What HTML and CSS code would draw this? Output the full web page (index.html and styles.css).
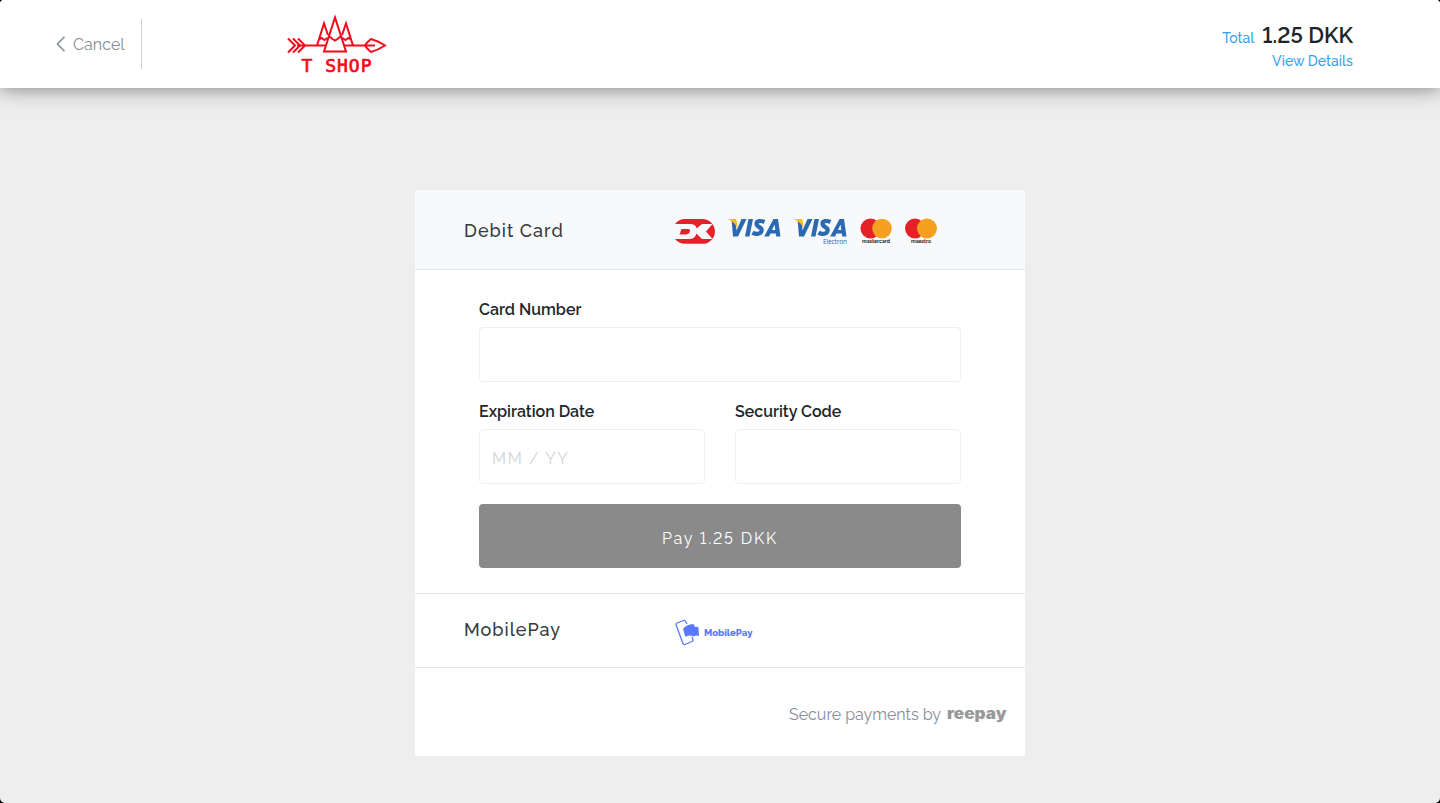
FILE: index.html
```html
<!DOCTYPE html>
<html lang="en">
<head>
<meta charset="utf-8">
<title>T Shop – Payment</title>
<link rel="stylesheet" href="styles.css">
</head>
<body>
<div class="window">
<header class="topbar">
  <a class="cancel"><svg class="chevron" width="10" height="16" viewBox="0 0 10 16"><path d="M8.500 .8 1.500 8l7 7.200"/></svg><span class="cancel-text">Cancel</span></a>
  <svg class="logo" width="102" height="66" viewBox="0 0 102 66">
    <g class="logo-lines">
      <path d="M10 31.500H39M57 31.500H78"/>
      <path d="M1 24.500l7 7L1 38.500M6 24.500l7 7-7 7M11 24.500l7 7-7 7"/>
      <path d="M78 31.500q1.500-3 6-6.500 7 2 14 6.500-7 4.500-14 6.500-4.500-3.500-6-6.500zM78 31.500h10"/>
      <path d="M30 31.500 37 9.500 41 21M31.500 26l3-2 3 2 3-2M66 31.500 59 9.500 55 21M64.500 26l-3-2-3 2-3-2"/>
      <path d="M37 37.500 48 3.500 59 37.500zM42.500 22.500l3 2.500 2.500 1.500 2.500-1.500 3-2.500"/>
    </g>
    <text class="logo-text" x="14.500" y="58" textLength="70">T SHOP</text>
  </svg>
  <div class="summary">
    <div class="amount-row"><span class="total">Total</span><span class="amount">1.25 DKK</span></div>
    <a class="details">View Details</a>
  </div>
</header>
<main class="card">
  <section class="method method-active">
    <h2 class="method-name name-debit">Debit Card</h2>
    <svg class="brands" width="264" height="30" viewBox="0 0 264 30">
      <clipPath id="dk"><path d="M10 3h17.500a12.400 12.400 0 0 1 0 24.800H10Q4 27.800 0 23V8Q4 3 10 3z"/></clipPath>
      <g clip-path="url(#dk)">
        <rect class="red" y="3" width="41" height="25"/>
        <path class="white" d="M-1 8H15q6 0 6.500 4.500L27 8h10.500l-6.500 7.500 6.500 7.500H27l-5.500-5.500Q20 23 14 23H-1z"/>
        <path class="red" d="M6.500 13h6.500q2.500 0 2 2-.5 3-4 3.500H4.500z"/>
      </g>
      <g id="visa">
        <path class="visa-blue" d="M56.500 3h4l1 11.500L66.500 3h5l-8.500 17.500h-5zM73.500 3h4.500l-3.500 17.500h-4.500zM98.500 3h4.500l2.500 17.500h-4.200l-.6-3h-5.200L94 20.500H89.200zM99.500 8.500 97 14h3.300z"/>
        <path class="visa-s" d="M89.500 6c-4-1.800-8-1-8 1.800 0 3.300 5.500 3.300 5.200 6.300-.4 4.300-5.700 4.700-9.200 2.500"/>
        <path class="gold" d="M52.500 3h7q2 0 2.200 2l.8 7-3-4.500q-2.500-3-7-4.500z"/>
      </g>
      <use href="#visa" x="66"/>
      <text class="electron" x="148" y="27.500" textLength="24">Electron</text>
      <circle class="card-red" cx="195.500" cy="12.500" r="10"/>
      <circle class="card-orange" cx="207" cy="12.500" r="9.800"/>
      <text class="brand-text" x="187" y="27" textLength="28">mastercard</text>
      <circle class="card-red" cx="240" cy="12.500" r="10"/>
      <circle class="card-orange" cx="252" cy="12.500" r="10"/>
      <text class="brand-text" x="236" y="27" textLength="20">maestro</text>
    </svg>
  </section>
  <form class="form">
    <div class="field"><label class="label label-number">Card Number</label><div class="input"></div></div>
    <div class="columns">
      <div class="field"><label class="label label-date">Expiration Date</label><div class="input"><span class="placeholder">MM / YY</span></div></div>
      <div class="field"><label class="label label-code">Security Code</label><div class="input"></div></div>
    </div>
    <button class="pay" type="button">Pay 1.25 DKK</button>
  </form>
  <section class="method method-mobile">
    <h2 class="method-name name-mobile">MobilePay</h2>
    <svg class="mobilepay" width="80" height="28" viewBox="0 0 80 28">
      <path class="phone" d="M12 5 10.500 2.500Q10 1 8.500 1.500L2 4Q.5 4.700 1.200 6.200L8 24.500Q8.500 26 10 25.500l7-3q1.500-.7 1-2l-1-2.500"/>
      <path class="mp-fill" d="M8 10q3-4.500 10.500-5l1.500 3q2.500-.5 3.500.5l.5 8.500q-3-1-5.500.5Q14 15.500 10.500 18z"/>
      <text class="mp-text" x="29" y="17" textLength="48.500" lengthAdjust="spacingAndGlyphs">MobilePay</text>
    </svg>
  </section>
  <footer class="footer"><span class="secure">Secure payments by</span><svg class="reepay" width="62" height="20" viewBox="0 0 62 20"><text class="reepay-text" x="1" y="14" textLength="59.500" lengthAdjust="spacingAndGlyphs">reepay</text></svg></footer>
</main>
</div>
</body>
</html>
```
FILE: styles.css
```css
* { box-sizing: border-box; }
body { margin: 0; background: #000; font-family: Raleway, Lato, sans-serif; font-feature-settings: "lnum"; color: #212529; }
.window { height: 803px; background: #eee; border-radius: 4px 4px 5px 5px; overflow: hidden; }
.topbar { height: 88px; display: flex; align-items: flex-start; background: #fff; box-shadow: 0 0 20px rgba(0,0,0,.5); padding-right: 87px; }
.cancel { width: 142px; height: 50px; margin-top: 19px; border-right: 1px solid #ced0d2; padding-left: 56px; display: flex; align-items: center; gap: 7px; color: #868e96; font-size: 16px; }
.chevron { fill: none; stroke: #868e96; stroke-width: 1.6; }
.cancel-text { letter-spacing: .05px; }
.logo { margin: 14px 0 0 145px; }
.logo-lines { fill: none; stroke: #f5091a; stroke-width: 2; }
.logo-text { font: 18px "DejaVu Sans Mono", monospace; fill: #f5091a; stroke: #f5091a; stroke-width: .7; }
.summary { margin-left: auto; padding-top: 19px; display: flex; flex-direction: column; align-items: flex-end; color: #369ff0; font-size: 14px; font-weight: 500; }
.amount-row { height: 33px; line-height: 32px; display: flex; align-items: baseline; gap: 8px; }
.amount { color: #212529; font-size: 22px; font-weight: 600; }
.details { line-height: 18px; letter-spacing: .04px; }
.card { width: 610px; height: 567px; margin: 101px auto 0; background: #fff; }
.method { display: grid; grid-template-columns: 211px 1fr; align-items: center; padding-left: 49px; }
.method-active { height: 81px; background: #f8f9fb; border-top: 1px solid #e8ebef; border-bottom: 1px solid #e4e7ea; }
.method-name { margin: 0; font-size: 18px; font-weight: 500; color: #343a40; letter-spacing: 1px; line-height: 24px; }
.name-debit { padding-top: 2px; }
.name-mobile { padding-bottom: 2px; }
.brands { margin-top: 2px; }
.red { fill: #e6212b; }
.white { fill: #f8f9fc; }
.visa-blue { fill: #2c69b3; fill-rule: evenodd; }
.visa-s { fill: none; stroke: #2c69b3; stroke-width: 4.2; }
.gold { fill: #fbbf15; }
.card-red { fill: #e52027; }
.card-orange { fill: #f6a020; }
.electron { font: 6.5px "Open Sans", sans-serif; fill: #2864af; }
.brand-text { font: bold 5px Raleway, sans-serif; fill: #222; }
.form { height: 323px; padding: 28px 64px 0; }
.columns { display: grid; grid-template-columns: 1fr 1fr; gap: 30px; margin-top: 18px; }
.label { display: block; height: 29px; line-height: 24px; font-size: 16px; font-weight: 600; }
.input { height: 55px; border: 1px solid #edeff5; border-radius: 4px; padding: 3px 12px 0; display: flex; align-items: center; }
.placeholder { font-size: 16px; font-weight: 400; color: #d0d3d8; letter-spacing: 1.6px; }
.pay { display: block; width: 100%; height: 64px; margin-top: 20px; border: 0; border-radius: 4px; background: #8a8a8a; color: #fff; font: 400 16px Raleway, Lato, sans-serif; font-feature-settings: "lnum"; letter-spacing: 1.8px; padding: 4px 0 0; }
.method-mobile { height: 75px; border-top: 1px solid #e5e7e9; border-bottom: 1px solid #e5e7e9; }
.mobilepay { margin-top: 4px; }
.phone { fill: none; stroke: #5a78ff; stroke-width: 1.3; }
.mp-fill { fill: #5a78ff; }
.mp-text { font: 800 9px Raleway, sans-serif; fill: #5a78ff; }
.footer { height: 88px; display: flex; align-items: center; justify-content: flex-end; gap: 5px; padding: 5px 17px 0 0; color: #868e96; font-size: 16px; }
.secure { letter-spacing: 0; }
.reepay-text { font: 900 15px Inter, sans-serif; fill: #999; }
```
